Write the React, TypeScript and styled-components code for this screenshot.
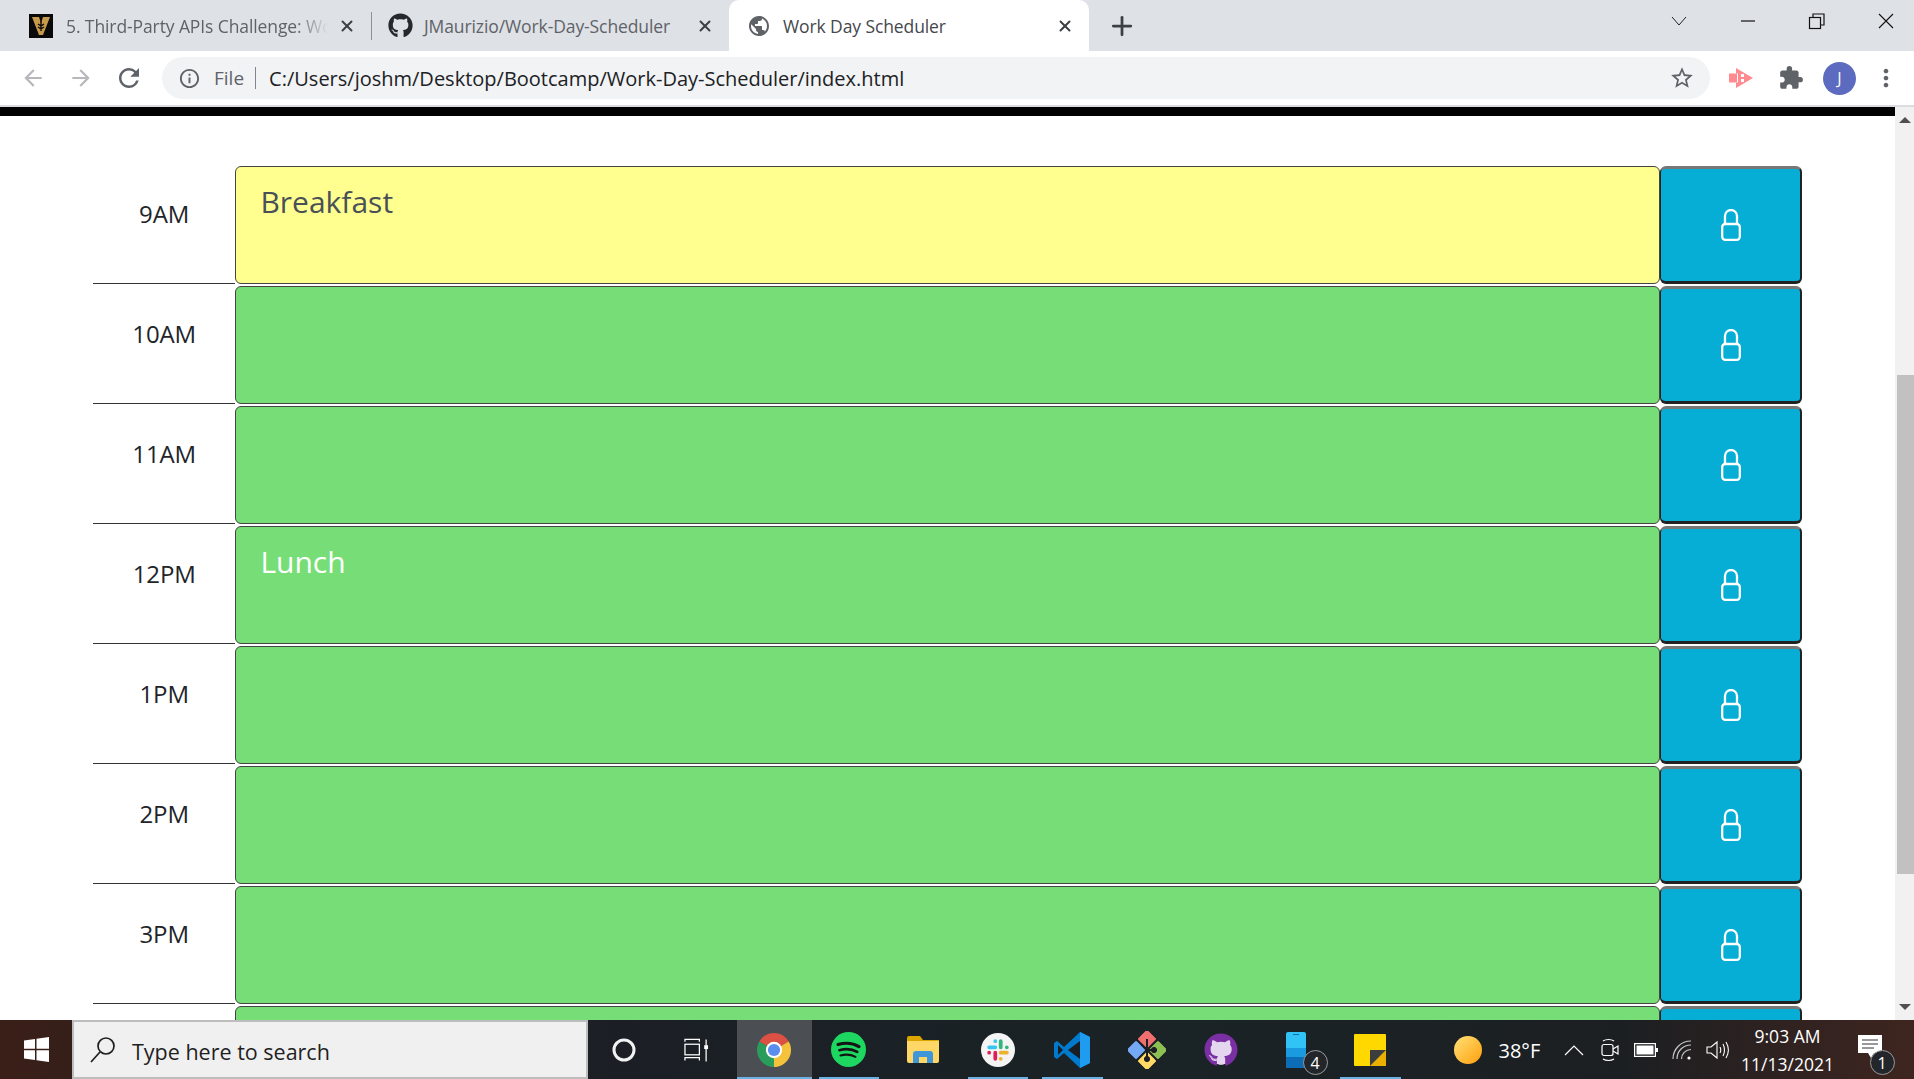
import styled, { createGlobalStyle } from 'styled-components';
import { X, Plus } from 'lucide-react';
import { FaGithub } from 'react-icons/fa';
import {
  MdArrowBack,
  MdArrowForward,
  MdRefresh,
  MdInfoOutline,
  MdStarBorder,
  MdExtension,
  MdPublic,
  MdMoreVert,
} from 'react-icons/md';

type Tone = 'present' | 'future';

interface IHour {
  id: number;
  label?: string;
  tone: Tone;
  text?: string;
}

// the eighth row runs under the taskbar, its label is out of sight
const hours: IHour[] = [
  { id: 9, label: '9AM', tone: 'present', text: 'Breakfast' },
  { id: 10, label: '10AM', tone: 'future' },
  { id: 11, label: '11AM', tone: 'future' },
  { id: 12, label: '12PM', tone: 'future', text: 'Lunch' },
  { id: 13, label: '1PM', tone: 'future' },
  { id: 14, label: '2PM', tone: 'future' },
  { id: 15, label: '3PM', tone: 'future' },
  { id: 16, tone: 'future' },
];

const GlobalStyle = createGlobalStyle`
  html, body {
    margin: 0;
    height: 100%;
    overflow: hidden;
    background: #fff;
    font-family: "Open Sans", "Noto Sans", sans-serif;
  }
  * {
    box-sizing: border-box;
  }
`;

const Frame = styled.div`
  display: flex;
  flex-direction: column;
  height: 100vh;
`;

/* browser chrome */
const TabStrip = styled.div`
  display: flex;
  align-items: stretch;
  height: 51px;
  padding-left: 14px;
  background: #dee1e6;
`;
const Tab = styled.div<{ $width: number; $pad: number; $gap: number; $active?: boolean }>`
  position: relative;
  display: flex;
  align-items: center;
  gap: ${(p) => p.$gap}px;
  width: ${(p) => p.$width}px;
  padding: 0 15px 0 ${(p) => p.$pad}px;
  color: ${(p) => (p.$active ? '#45484c' : '#5f6368')};
  background: ${(p) => (p.$active ? '#fff' : 'transparent')};
  border-radius: ${(p) => (p.$active ? '10px 10px 0 0' : '0')};
`;
const TabTitle = styled.span<{ $fade?: boolean }>`
  flex: 1;
  min-width: 0;
  white-space: nowrap;
  font-size: 17.5px;
  letter-spacing: -0.1px;
  ${(p) => (p.$fade ? 'mask-image: linear-gradient(to right, #000 86%, transparent 98%);' : '')}
`;
const TabClose = styled(X)`
  flex: none;
  margin-left: -8px;
  color: #3c4043;
`;
const TabSeparator = styled.div`
  flex: none;
  align-self: center;
  width: 1px;
  height: 28px;
  background: #8e9195;
`;
const NewTab = styled.div`
  display: flex;
  align-items: center;
  margin-left: 18px;
  color: #3c4043;
`;
const CaptionGroup = styled.div`
  display: flex;
  align-items: flex-start;
  gap: 49px;
  margin-left: auto;
  padding: 11px 18px 0 0;
`;
const Toolbar = styled.div`
  display: flex;
  align-items: center;
  flex: none;
  height: 56px;
  padding: 0 0 0 9px;
  background: #fff;
  border-bottom: 2px solid #dadce0;
`;
const NavButton = styled.div<{ $muted?: boolean }>`
  display: flex;
  align-items: center;
  justify-content: center;
  width: 48px;
  color: ${(p) => (p.$muted ? '#b6b8bb' : '#5f6368')};
`;
const Omnibox = styled.div`
  display: flex;
  align-items: center;
  flex: 1;
  height: 42px;
  margin-left: 9px;
  padding: 0 15px 0 16px;
  background: #f1f3f4;
  border-radius: 21px;
  color: #5f6368;
`;
const SiteLabel = styled.span`
  margin-left: 13px;
  font-size: 19px;
  color: #5f6368;
`;
const OmniDivider = styled.div`
  width: 1px;
  height: 22px;
  margin: 0 13px 0 11px;
  background: #80868b;
`;
const Url = styled.span`
  font-size: 20px;
  color: #202124;
`;
const StarSlot = styled.div`
  display: flex;
  margin-left: auto;
`;
const ActionGroup = styled.div`
  display: flex;
  align-items: center;
  margin-left: 7px;
  padding-right: 6px;
`;
const ActionSlot = styled.div<{ $narrow?: boolean }>`
  display: flex;
  align-items: center;
  justify-content: center;
  width: ${(p) => (p.$narrow ? 44 : 49)}px;
  color: #5f6368;
`;
const Avatar = styled.div`
  display: flex;
  align-items: center;
  justify-content: center;
  width: 33px;
  height: 33px;
  border-radius: 50%;
  background: #5c6bc0;
  color: #fff;
  font-size: 16px;
`;

/* page */
const Viewport = styled.div`
  display: flex;
  flex: 1;
  min-height: 0;
  overflow: hidden;
`;
const Page = styled.main`
  flex: 1;
  min-width: 0;
  background: #fff;
`;
const BlackBar = styled.div`
  height: 9px;
  background: #000;
`;
const Schedule = styled.div`
  padding: 50px 93px 0;
`;
const Row = styled.div`
  display: grid;
  grid-template-columns: 1fr 10fr 1fr;
  height: 120px;
  padding-bottom: 2px;
`;
const Hour = styled.div`
  padding-top: 32px;
  border-bottom: 1px solid #333;
  font-size: 24px;
  line-height: 32px;
  text-align: center;
  color: #212529;
  letter-spacing: -0.1px;
`;
const Entry = styled.div<{ $tone: Tone }>`
  padding: 16px 24px;
  border: 1px solid #444;
  border-radius: 6px;
  font-size: 30px;
  line-height: 38px;
  background: ${(p) => (p.$tone === 'present' ? '#ffff8f' : '#77dd77')};
  color: ${(p) => (p.$tone === 'present' ? '#495057' : '#fff')};
`;
const SaveButton = styled.button`
  display: flex;
  align-items: center;
  justify-content: center;
  padding: 0 0 0 1px;
  background: #06aed5;
  border-style: solid;
  border-width: 3px 2px 3px 1px;
  border-color: #777 #222 #222 #222;
  border-radius: 6px;
`;

/* scrollbar */
const Scrollbar = styled.div`
  display: flex;
  flex-direction: column;
  align-items: center;
  flex: none;
  width: 19px;
  padding-top: 10px;
  background: #f1f1f1;
`;
const ScrollArrow = styled.div<{ $down?: boolean }>`
  width: 0;
  height: 0;
  border-left: 6px solid transparent;
  border-right: 6px solid transparent;
  ${(p) => (p.$down ? 'border-top: 6px solid #505050;' : 'border-bottom: 6px solid #505050;')}
`;
const ScrollThumb = styled.div`
  align-self: flex-end;
  flex: none;
  width: 17px;
  height: 499px;
  margin: 252px 0 130px;
  background: #c1c1c1;
`;

/* taskbar */
const Taskbar = styled.footer`
  display: flex;
  align-items: stretch;
  flex: none;
  height: 59px;
  color: #fff;
  background: linear-gradient(to right, #3a1f18 0, #1b1f25 32%, #1a2326 62%, #1c1f22 85%, #3f251f 100%);
`;
const StartButton = styled.div`
  display: flex;
  align-items: center;
  justify-content: center;
  flex: none;
  width: 72px;
`;
const SearchBox = styled.div`
  display: flex;
  align-items: center;
  gap: 16px;
  flex: none;
  width: 516px;
  padding: 0 0 0 16px;
  background: #f0f0f0;
  border: 2px solid #bdbdbd;
  color: #1f1f1f;
  font-size: 21.5px;
`;
const SearchText = styled.span`
  padding-top: 4px;
`;
const ShellGroup = styled.div`
  display: flex;
  flex: none;
  padding-right: 5px;
`;
const ShellSlot = styled.div`
  display: flex;
  align-items: center;
  justify-content: center;
  flex: none;
  width: 72px;
`;
const AppSlot = styled.div<{ $running?: boolean; $active?: boolean }>`
  position: relative;
  display: flex;
  align-items: center;
  justify-content: center;
  flex: none;
  width: 74.5px;
  background: ${(p) => (p.$active ? '#4b4e52' : 'transparent')};
  &::after {
    content: '';
    position: absolute;
    bottom: 0;
    left: ${(p) => (p.$active ? 0 : 7)}px;
    right: ${(p) => (p.$active ? 0 : 7)}px;
    height: 2px;
    background: ${(p) => (p.$running || p.$active ? '#6cb1e4' : 'transparent')};
  }
`;
const CountBadge = styled.span`
  position: absolute;
  top: 30px;
  left: 44px;
  display: flex;
  align-items: center;
  justify-content: center;
  width: 25px;
  height: 25px;
  border: 1px solid #9a9a9a;
  border-radius: 50%;
  background: #22262a;
  font-size: 16px;
`;
const Sun = styled.div`
  align-self: center;
  flex: none;
  width: 28px;
  height: 28px;
  margin-left: 46px;
  border-radius: 50%;
  background: linear-gradient(135deg, #ffe27a, #ff9f0a);
`;
const Temp = styled.span`
  align-self: center;
  flex: none;
  width: 57px;
  margin-left: 17px;
  padding-top: 2px;
  font-size: 20px;
`;
const TraySlot = styled.div`
  display: flex;
  align-items: center;
  justify-content: center;
  flex: none;
  width: 36px;
`;
const Clock = styled.div`
  align-self: center;
  flex: none;
  width: 104px;
  font-size: 17.5px;
  line-height: 28px;
  text-align: center;
`;
const NotifySlot = styled.div`
  position: relative;
  display: flex;
  align-items: center;
  flex: none;
  padding: 0 0 6px 18px;
`;
const NotifyBadge = styled(CountBadge)`
  top: 30px;
  left: 30px;
`;
const GithubDisc = styled.div`
  display: flex;
  border-radius: 50%;
  color: #7b2fa5;
  background: radial-gradient(circle, #e4d6ee 60%, transparent 62%);
`;

const VanderbiltIcon = () => (
  <svg width="24" height="24" viewBox="0 0 24 24" style={{ flex: 'none' }}>
    <rect width="24" height="24" fill="#0a0a0a" />
    <polygon points="3,3 10,3 12,9 14,3 21,3 14,21 10,21" fill="#c69a4a" />
    <path d="M12 7v10M9 10l3 2 3-2M9 13l3 2 3-2" stroke="#0a0a0a" strokeWidth="1.4" fill="none" />
  </svg>
);

const LockIcon = () => (
  <svg width="20" height="32" viewBox="0 0 20 32" fill="none" stroke="#fff" strokeWidth="2.3">
    <rect x="1.2" y="15" width="17.600" height="15.800" rx="3" />
    <path d="M4 15V7a6 6 0 0 1 12 0v8" />
  </svg>
);

const Chevron = () => (
  <svg width="20" height="20" viewBox="0 0 20 20" fill="none" stroke="#222" strokeWidth="1">
    <path d="M3 6l7 8 7-8" />
  </svg>
);
const Minimize = () => (
  <svg width="20" height="20" viewBox="0 0 20 20" stroke="#111" strokeWidth="1.2">
    <path d="M3 10h14" />
  </svg>
);
const Restore = () => (
  <svg width="20" height="20" viewBox="0 0 20 20" fill="none" stroke="#111" strokeWidth="1.2">
    <rect x="2.5" y="6.5" width="11" height="11" />
    <path d="M6 6V3h11v11h-3" />
  </svg>
);
const CloseWindow = () => (
  <svg width="20" height="20" viewBox="0 0 20 20" stroke="#111" strokeWidth="1.1">
    <path d="M3 3l14 14M17 3L3 17" />
  </svg>
);

const RedExtension = () => (
  <svg width="25" height="20" viewBox="0 0 25 20">
    <rect x="0" y="5.500" width="8" height="9" fill="#ff8a8f" />
    <polygon points="7,0 24,10 7,20 7,14.500 9,14.500 9,5.500 7,5.500" fill="#ff8a8f" />
    <path d="M12 6h3v3h-3zM12 11h3v3h-3z" fill="#fff" />
  </svg>
);

const WindowsLogo = () => (
  <svg width="25" height="25" viewBox="0 0 25 25" fill="#fff">
    <polygon points="0,3.5 11,2 11,11.8 0,11.8" />
    <polygon points="12.5,1.8 25,0 25,11.8 12.5,11.8" />
    <polygon points="0,13.2 11,13.2 11,23 0,21.5" />
    <polygon points="12.5,13.2 25,13.2 25,25 12.5,23.2" />
  </svg>
);
const SearchGlass = () => (
  <svg width="26" height="28" viewBox="0 0 26 28" fill="none" stroke="#1f1f1f" strokeWidth="1.7">
    <circle cx="16" cy="10" r="8" />
    <path d="M10 16L1 26" />
  </svg>
);
const Cortana = () => (
  <svg width="24" height="24" viewBox="0 0 24 24" fill="none" stroke="#f2f2f2" strokeWidth="3">
    <circle cx="12" cy="12" r="10" />
  </svg>
);
const TaskView = () => (
  <svg width="25" height="24" viewBox="0 0 26 24" fill="none" stroke="#fff" strokeWidth="1.3">
    <path d="M1 3.5V1h15v2.5M1 23v-3h15v3" />
    <rect x="1" y="6" width="15" height="11" />
    <path d="M23 1v6M23 11v13" />
    <rect x="21" y="7" width="4" height="4" fill="#fff" stroke="none" />
  </svg>
);

const ChromeIcon = () => (
  <svg width="34" height="34" viewBox="0 0 100 100">
    <path d="M50 50L6.7 25A50 50 0 0 1 93.3 25Z" fill="#dd5044" />
    <path d="M50 50L6.7 25A50 50 0 0 0 50 100Z" fill="#2a9d5c" />
    <path d="M50 50L50 100A50 50 0 0 0 93.3 25Z" fill="#f5c33b" />
    <circle cx="50" cy="50" r="24" fill="#fff" />
    <circle cx="50" cy="50" r="18" fill="#5b8def" />
  </svg>
);
const SpotifyIcon = () => (
  <svg width="35" height="35" viewBox="0 0 100 100" fill="none" stroke="#141414" strokeLinecap="round">
    <circle cx="50" cy="50" r="50" fill="#1ed760" stroke="none" />
    <path d="M20 36c20-6 42-5 60 6" strokeWidth="9" />
    <path d="M24 52c18-5 36-4 51 5" strokeWidth="7.5" />
    <path d="M27 67c15-4 30-3 43 4" strokeWidth="6" />
  </svg>
);
const ExplorerIcon = () => (
  <svg width="32" height="27" viewBox="0 0 32 27">
    <path d="M0 2a2 2 0 0 1 2-2h11l3 4h16v5H0z" fill="#dca500" />
    <path d="M0 5h32v20a2 2 0 0 1-2 2H2a2 2 0 0 1-2-2z" fill="#ffd766" />
    <path d="M6 27v-9a3 3 0 0 1 3-3h14a3 3 0 0 1 3 3v9h-6v-6h-8v6z" fill="#3f97d9" />
  </svg>
);
const SlackIcon = () => (
  <svg width="34" height="34" viewBox="0 0 100 100" strokeLinecap="round" strokeWidth="11" fill="none">
    <circle cx="50" cy="50" r="50" fill="#f4f4f4" stroke="none" />
    <path d="M24 42h18M42 24h0" stroke="#36c5f0" />
    <path d="M58 24v18M76 42h0" stroke="#2eb67d" />
    <path d="M58 58h18M58 76h0" stroke="#ecb22e" />
    <path d="M42 58v18M24 58h0" stroke="#e01e5a" />
  </svg>
);
const VsCodeIcon = () => (
  <svg width="36" height="36" viewBox="0 0 36 36">
    <polygon points="26,0 36,5 36,31 26,36 10,21 3,27 0,25 0,11 3,9 10,15" fill="#007acc" />
    <polygon points="26,0 36,5 36,31 26,36" fill="#1f9cf0" />
    <polygon points="26,9 26,27 14,18" fill="#1a1e24" />
    <polygon points="4,13 9,18 4,23" fill="#1a1e24" />
  </svg>
);
const GitKrakenIcon = () => (
  <svg width="38" height="38" viewBox="0 0 38 38" stroke="#1b1f25" strokeWidth="1">
    <g transform="rotate(45 19 19)">
      <rect x="4" y="4" width="14.5" height="14.5" rx="2" fill="#ef6e6e" />
      <rect x="19.5" y="4" width="14.5" height="14.5" rx="2" fill="#8cc152" />
      <rect x="19.5" y="19.5" width="14.5" height="14.5" rx="2" fill="#ffd966" />
      <rect x="4" y="19.5" width="14.5" height="14.5" rx="2" fill="#74a9f5" />
    </g>
    <path d="M19 8v22M13 13l6 6M27 19h-6" stroke="#1b1f25" strokeWidth="2" fill="none" />
    <circle cx="19" cy="28" r="2.6" fill="#1b1f25" />
    <circle cx="26" cy="19" r="2.6" fill="#1b1f25" />
  </svg>
);
const PhoneIcon = () => (
  <svg width="20" height="36" viewBox="0 0 20 36">
    <rect width="20" height="36" rx="2" fill="#31c3f5" />
    <rect y="16" width="20" height="9" fill="#1a9be0" />
    <path d="M0 25h20v9a2 2 0 0 1-2 2H2a2 2 0 0 1-2-2z" fill="#0c6cb5" />
    <rect x="7" y="2" width="6" height="1" fill="#0c6cb5" />
  </svg>
);
const StickyIcon = () => (
  <svg width="32" height="32" viewBox="0 0 32 32">
    <rect width="32" height="32" rx="1" fill="#ffd800" />
    <path d="M32 16v14a2 2 0 0 1-2 2H16z" fill="#eab000" />
    <path d="M16 16h16L16 32z" fill="#3d3d3d" />
  </svg>
);

const TrayChevron = () => (
  <svg width="20" height="12" viewBox="0 0 20 12" fill="none" stroke="#fff" strokeWidth="1.2">
    <path d="M1 11l9-9 9 9" />
  </svg>
);
const MeetIcon = () => (
  <svg width="18" height="24" viewBox="0 0 18 24" fill="none" stroke="#fff" strokeWidth="1.2">
    <path d="M2 3c3-2 8-2 11 0M2 21c3 2 8 2 11 0" />
    <rect x="1" y="6.5" width="11" height="11" rx="2" />
    <path d="M12 11l5-3v8l-5-3" />
  </svg>
);
const BatteryIcon = () => (
  <svg width="24" height="14" viewBox="0 0 24 14">
    <rect x="0.6" y="0.6" width="20.8" height="12.8" fill="none" stroke="#fff" strokeWidth="1.2" />
    <rect x="2.5" y="2.5" width="17" height="9" fill="#fff" />
    <rect x="22" y="5" width="2" height="4" fill="#fff" />
  </svg>
);
const WifiIcon = () => (
  <svg width="20" height="20" viewBox="0 0 20 20" fill="none" stroke="#c8c8c8" strokeWidth="1.2">
    <path d="M1 19C1 9 9 1 19 1M5 19c0-8 6-14 14-14M9.500 19c0-5 4-9.500 9.500-9.500" />
    <circle cx="17" cy="18" r="1.600" fill="#fff" stroke="none" />
  </svg>
);
const VolumeIcon = () => (
  <svg width="24" height="20" viewBox="0 0 24 20" fill="none" stroke="#fff" strokeWidth="1.1">
    <path d="M1 7h4l6-5v16l-6-5H1z" />
    <path d="M14 7c1 2 1 4 0 6M17 4c2 4 2 8 0 12M20 2c3 5 3 11 0 16" />
  </svg>
);
const NotifyIcon = () => (
  <svg width="24" height="24" viewBox="0 0 24 24">
    <path d="M0 0h24v18h-8l-3 5-3-5H0z" fill="#fff" />
    <path d="M4 5h16M4 9h16M4 13h12" stroke="#333" strokeWidth="1" />
  </svg>
);

function App() {
  return (
    <Frame>
      <GlobalStyle />
      <TabStrip>
        <Tab $width={357} $pad={15} $gap={13}>
          <VanderbiltIcon />
          <TabTitle $fade>5. Third-Party APIs Challenge: Wo</TabTitle>
          <TabClose size={18} strokeWidth={2.6} />
        </Tab>
        <TabSeparator />
        <Tab $width={357} $pad={16} $gap={11}>
          <FaGithub size={25} color="#24292e" style={{ flex: 'none' }} />
          <TabTitle>JMaurizio/Work-Day-Scheduler</TabTitle>
          <TabClose size={18} strokeWidth={2.6} />
        </Tab>
        <Tab $active $width={360} $pad={18} $gap={12}>
          <MdPublic size={24} color="#5f6368" style={{ flex: 'none' }} />
          <TabTitle>Work Day Scheduler</TabTitle>
          <TabClose size={18} strokeWidth={2.6} />
        </Tab>
        <NewTab>
          <Plus size={30} strokeWidth={2.2} />
        </NewTab>
        <CaptionGroup>
          <Chevron />
          <Minimize />
          <Restore />
          <CloseWindow />
        </CaptionGroup>
      </TabStrip>
      <Toolbar>
        <NavButton $muted>
          <MdArrowBack size={26} />
        </NavButton>
        <NavButton $muted>
          <MdArrowForward size={26} />
        </NavButton>
        <NavButton>
          <MdRefresh size={30} />
        </NavButton>
        <Omnibox>
          <MdInfoOutline size={23} />
          <SiteLabel>File</SiteLabel>
          <OmniDivider />
          <Url>C:/Users/joshm/Desktop/Bootcamp/Work-Day-Scheduler/index.html</Url>
          <StarSlot>
            <MdStarBorder size={26} />
          </StarSlot>
        </Omnibox>
        <ActionGroup>
          <ActionSlot>
            <RedExtension />
          </ActionSlot>
          <ActionSlot>
            <MdExtension size={26} />
          </ActionSlot>
          <ActionSlot>
            <Avatar>J</Avatar>
          </ActionSlot>
          <ActionSlot $narrow>
            <MdMoreVert size={28} />
          </ActionSlot>
        </ActionGroup>
      </Toolbar>
      <Viewport>
        <Page>
          <BlackBar />
          <Schedule>
            {hours.map((hour) => (
              <Row key={hour.id}>
                <Hour>{hour.label}</Hour>
                <Entry $tone={hour.tone}>{hour.text}</Entry>
                <SaveButton aria-label={`Save hour ${hour.id}`}>
                  <LockIcon />
                </SaveButton>
              </Row>
            ))}
          </Schedule>
        </Page>
        <Scrollbar>
          <ScrollArrow />
          <ScrollThumb />
          <ScrollArrow $down />
        </Scrollbar>
      </Viewport>
      <Taskbar>
        <StartButton>
          <WindowsLogo />
        </StartButton>
        <SearchBox>
          <SearchGlass />
          <SearchText>Type here to search</SearchText>
        </SearchBox>
        <ShellGroup>
          <ShellSlot>
            <Cortana />
          </ShellSlot>
          <ShellSlot>
            <TaskView />
          </ShellSlot>
        </ShellGroup>
        <AppSlot $active>
          <ChromeIcon />
        </AppSlot>
        <AppSlot $running>
          <SpotifyIcon />
        </AppSlot>
        <AppSlot>
          <ExplorerIcon />
        </AppSlot>
        <AppSlot $running>
          <SlackIcon />
        </AppSlot>
        <AppSlot $running>
          <VsCodeIcon />
        </AppSlot>
        <AppSlot>
          <GitKrakenIcon />
        </AppSlot>
        <AppSlot>
          <GithubDisc>
            <FaGithub size={34} />
          </GithubDisc>
        </AppSlot>
        <AppSlot>
          <PhoneIcon />
          <CountBadge>4</CountBadge>
        </AppSlot>
        <AppSlot $running>
          <StickyIcon />
        </AppSlot>
        <Sun />
        <Temp>38°F</Temp>
        <TraySlot>
          <TrayChevron />
        </TraySlot>
        <TraySlot>
          <MeetIcon />
        </TraySlot>
        <TraySlot>
          <BatteryIcon />
        </TraySlot>
        <TraySlot>
          <WifiIcon />
        </TraySlot>
        <TraySlot>
          <VolumeIcon />
        </TraySlot>
        <Clock>
          <div>9:03 AM</div>
          <div>11/13/2021</div>
        </Clock>
        <NotifySlot>
          <NotifyIcon />
          <NotifyBadge>1</NotifyBadge>
        </NotifySlot>
      </Taskbar>
    </Frame>
  );
}

export default App;
